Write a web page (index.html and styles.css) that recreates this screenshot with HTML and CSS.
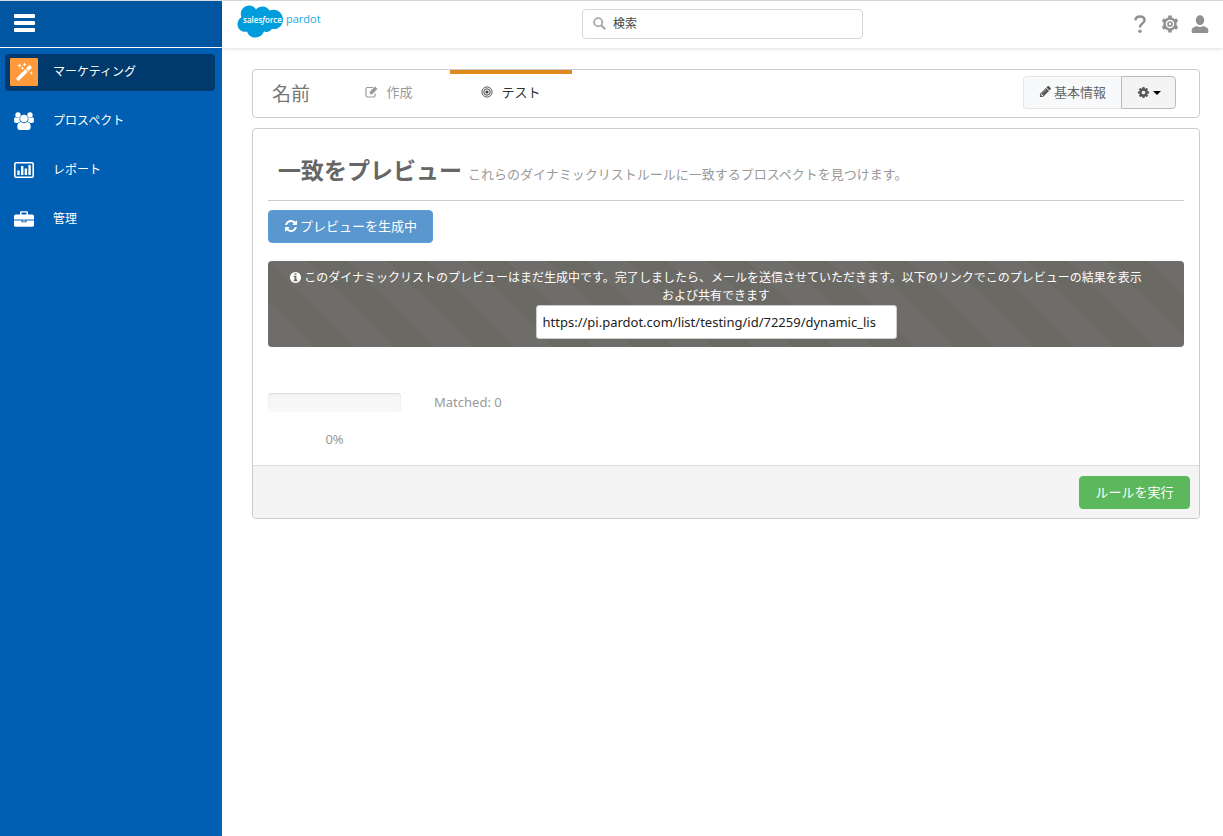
FILE: index.html
```html
<!DOCTYPE html>
<html lang="ja">
<head>
<meta charset="utf-8">
<title>一致をプレビュー</title>
<meta name="viewport" content="width=device-width, initial-scale=1">
<link rel="stylesheet" href="styles.css">
</head>
<body>
<div class="app">
  <aside class="sidebar">
    <div class="sidebar-top">
      <button class="menu-toggle" type="button" aria-label="メニュー"><span></span><span></span><span></span></button>
    </div>
    <nav class="nav">
      <a class="nav-item active" href="#">
        <span class="nav-icon"><svg viewBox="0 0 20 20" width="20" height="20" fill="#fff"><path d="M2.500 16 11.300 7.200l2.600 2.600L5.100 18.600q-.7.6-1.300 0L2.500 17.300q-.6-.6 0-1.300z"/><path d="M12 6.500 15 3.500q.6-.5 1.200 0L17.600 4.900q.5.6 0 1.200L14.600 9.100z"/><path d="M5.500 1.200 6.200 3l1.800.6-1.800.6-.7 1.800-.6-1.800L3 3.600 4.900 3zM10.500.200l.6 1.500 1.500.6-1.500.600-.6 1.500-.6-1.500-1.500-.6 1.500-.600zM8.500 4.500l.5 1.300 1.300.5L9 6.800l-.5 1.300L8 6.800l-1.300-.5L8 5.800zM17.300 9l.5 1.400 1.400.5-1.400.5-.5 1.400-.5-1.400-1.400-.5 1.400-.500z"/></svg></span>
        <span>マーケティング</span>
      </a>
      <a class="nav-item" href="#">
        <span class="nav-icon"><svg viewBox="0 0 20 18" width="20" height="18" fill="#fff"><circle cx="4" cy="3" r="2.700"/><circle cx="16" cy="3" r="2.700"/><path d="M0 8.500Q0 5 1.800 5.400q2 1.200 3.900.2Q5 8 6.500 9.700q-2 0-3 1.300H2Q0 11 0 8.500zM20 8.500Q20 5 18.200 5.400q-2 1.200-3.900.2Q15 8 13.500 9.700q2 0 3 1.300H18q2 0 2-2.500z"/><circle cx="10" cy="6.500" r="3.800"/><path d="M3.300 15q0-4.800 3.200-5 3.500 2.300 7 0 3.200.2 3.200 5 0 3-2.700 3H6q-2.700 0-2.700-3z"/></svg></span>
        <span>プロスペクト</span>
      </a>
      <a class="nav-item" href="#">
        <span class="nav-icon"><svg viewBox="0 0 20 16" width="20" height="16"><rect x=".8" y=".8" width="18.400" height="14.400" rx="1.200" fill="none" stroke="#fff" stroke-width="1.600"/><path fill="#fff" d="M3.300 8.500h2.400V13H3.300zM7 4h2.400v9H7zM10.700 6.500h2.400V13h-2.400zM14.400 3h2.400v10h-2.400z"/></svg></span>
        <span>レポート</span>
      </a>
      <a class="nav-item" href="#">
        <span class="nav-icon"><svg viewBox="0 0 20 16" width="20" height="16" fill="#fff"><path d="M6 3.500V1.500Q6 .2 7.300.2h5.400Q14 .2 14 1.500v2h4.200Q20 3.500 20 5.300V8.400H0V5.300Q0 3.500 1.800 3.500zM7.600 1.600v1.900h4.800V1.600zM0 9.400h7.500v1.300q0 .6.600.6h3.800q.6 0 .6-.6V9.400H20v4.800q0 1.600-1.800 1.600H1.800Q0 15.800 0 14.200z" fill-rule="evenodd"/><path d="M8.500 9.400h3v1h-3z"/></svg></span>
        <span>管理</span>
      </a>
    </nav>
  </aside>

  <div class="page">
    <header class="topbar">
      <a class="logo" href="#" aria-label="salesforce pardot">
        <svg viewBox="0 0 86 34" width="86" height="34">
          <path fill="#009ddc" d="M19 4.500C20.800 2.300 23.200 1.600 25.400 1.600c3 0 5.500 1.500 7 4 1.400-.7 2.800-.9 4-.9 5.800 0 9.600 4.600 9.600 9.700 0 6.300-5.300 10.600-11 9.400-1.400 2.500-4.700 4-8 2.800-1.500 3.800-4.800 5.900-8.600 5.900-4 0-7-2.200-8.300-5.800C4.600 27.600.500 24 .500 19.200c0-3.200 1.600-5.700 3.900-7C2.200 6 6.500.5 12 .5c3 0 5.500 1.600 7 4z"/>
          <text class="logo-sf" x="6" y="18">sales<tspan class="logo-force">f</tspan>orce</text>
          <text class="logo-pardot" x="49" y="18">pardot</text>
        </svg>
      </a>
      <label class="search">
        <svg viewBox="0 0 13 13" width="13" height="13" fill="none" stroke="#aaa"><circle cx="5.200" cy="5.200" r="4.100" stroke-width="1.800"/><path d="m8.300 8.300 4 4" stroke-width="2.200"/></svg>
        <input type="text" placeholder="検索" aria-label="検索">
      </label>
      <div class="tools">
        <button type="button" aria-label="ヘルプ"><svg viewBox="0 0 18 20" width="18" height="20"><path d="M4.400 6.400Q4.600 2.400 9 2.400t4.600 3.700q0 2-2.200 3.400Q9 11.100 9 13.600" fill="none" stroke="#919191" stroke-width="2.500"/><circle cx="9" cy="17.300" r="1.700" fill="#919191"/></svg></button>
        <button type="button" aria-label="設定"><svg viewBox="0 0 18 20" width="18" height="20" fill="none" stroke="#919191"><circle cx="9" cy="10" r="5.500" stroke-width="2.600"/><circle cx="9" cy="10" r="2" stroke-width="1.700"/><path stroke-width="3.600" d="M9 1.600v2.600M9 15.800v2.600M1.700 5.800 4 7.100M14 12.900l2.300 1.300M1.700 14.200 4 12.900M14 7.100l2.300-1.300"/></svg></button>
        <button type="button" aria-label="アカウント"><svg viewBox="0 0 18 20" width="18" height="20" fill="#919191"><ellipse cx="9" cy="6.300" rx="4.200" ry="5"/><path d="M.700 18.300v-2q0-2.600 3.600-3.700l1.600-.5q3 1.800 6.200 0l1.600.5q3.600 1.100 3.600 3.700v2q0 .7-.7.700H1.400q-.7 0-.7-.7z"/></svg></button>
      </div>
    </header>

    <main class="content">
      <section class="tabs">
        <h1 class="tabs-title">名前</h1>
        <a class="tab" href="#">
          <svg viewBox="0 0 13 12" width="13" height="12" fill="none" stroke="#999"><path d="M8 1.500H2.500Q1 1.500 1 3v6.500Q1 11 2.500 11H8.500Q10 11 10 9.500V7.500" stroke-width="1.200"/><path d="M4.800 8.200v-2.400L10 .6l2.400 2.400-5.200 5.200z" fill="#999" stroke="none"/></svg>
          <span>作成</span>
        </a>
        <a class="tab current" href="#">
          <svg viewBox="0 0 12 12" width="12" height="12" fill="none" stroke="#444"><circle cx="6" cy="6" r="5.100" stroke-width=".9"/><circle cx="6" cy="6" r="3.200" stroke-width="1"/><circle cx="6" cy="6" r="1.600" fill="#444" stroke="none"/></svg>
          <span>テスト</span>
        </a>
        <div class="tab-actions">
          <button class="btn btn-info" type="button">
            <svg viewBox="0 0 1792 1792" width="13" height="13" fill="#555"><path d="M491 1536l91-91-235-235-91 91v107h128v128h107zm523-928q0-22-22-22-10 0-17 7l-542 542q-7 7-7 17 0 22 22 22 10 0 17-7l542-542q7-7 7-17zm-54-192l416 416-832 832h-416v-416zm683 96q0 53-37 90l-166 166-416-416 166-165q36-38 90-38 53 0 91 38l235 234q37 39 37 91z"/></svg>
            <span>基本情報</span>
          </button>
          <button class="btn btn-gear" type="button" aria-label="操作">
            <svg viewBox="0 0 1792 1792" width="13" height="13" fill="#555"><path d="M1152 896q0-106-75-181t-181-75-181 75-75 181 75 181 181 75 181-75 75-181zm512-109v222q0 12-8 23t-20 13l-185 28q-19 54-39 91 35 50 107 138 10 12 10 25t-9 23q-27 37-99 108t-94 71q-12 0-26-9l-138-108q-44 23-91 38-16 136-29 186-7 28-36 28h-222q-14 0-24.500-8.500t-11.500-21.500l-28-184q-49-16-90-37l-141 107q-10 9-25 9-14 0-25-11-126-114-165-168-7-10-7-23 0-12 8-23 15-21 51-66.500t54-70.500q-27-50-41-99l-183-27q-13-2-21-12.500t-8-23.500v-222q0-12 8-23t19-13l186-28q14-46 39-92-40-57-107-138-10-12-10-24 0-10 9-23 26-36 98.500-107.500t94.500-71.500q13 0 26 10l138 107q44-23 91-38 16-136 29-186 7-28 36-28h222q14 0 24.500 8.500t11.500 21.500l28 184q49 16 90 37l142-107q9-9 24-9 13 0 25 10 129 119 165 170 7 8 7 22 0 12-8 23-15 21-51 66.500t-54 70.500q26 50 41 98l183 28q13 2 21 12.500t8 23.500z"/></svg>
            <svg viewBox="0 0 8 4" width="8" height="4"><path d="M0 0h8L4 4z"/></svg>
          </button>
        </div>
      </section>

      <section class="panel">
        <div class="panel-body">
          <div class="panel-head">
            <h2>一致をプレビュー</h2>
            <p>これらのダイナミックリストルールに一致するプロスペクトを見つけます。</p>
          </div>
          <button class="btn btn-primary" type="button">
            <svg viewBox="0 0 1792 1792" width="14" height="14" fill="#fff"><path d="M1639 1056q0 5-1 7-64 268-268 434.500t-478 166.500q-146 0-282.500-55t-243.500-157l-129 129q-19 19-45 19t-45-19-19-45v-448q0-26 19-45t45-19h448q26 0 45 19t19 45-19 45l-137 137q71 66 161 102t187 36q134 0 250-65t186-179q11-17 53-117 8-23 30-23h192q13 0 22.500 9.500t9.500 22.500zm25-800v448q0 26-19 45t-45 19h-448q-26 0-45-19t-19-45 19-45l138-138q-148-137-349-137-134 0-250 65t-186 179q-11 17-53 117-8 23-30 23h-199q-13 0-22.500-9.500t-9.500-22.500v-7q65-268 270-434.500t480-166.500q146 0 284 55.500t245 156.500l130-129q19-19 45-19t45 19 19 45z"/></svg>
            <span>プレビューを生成中</span>
          </button>
          <div class="alert" role="status">
            <p><svg class="info" viewBox="128 128 1536 1536" width="11" height="11" fill="#fff"><path d="M1152 1376v-160q0-14-9-23t-23-9h-96v-512q0-14-9-23t-23-9h-320q-14 0-23 9t-9 23v160q0 14 9 23t23 9h96v320h-96q-14 0-23 9t-9 23v160q0 14 9 23t23 9h448q14 0 23-9t9-23zm-128-896v-160q0-14-9-23t-23-9h-192q-14 0-23 9t-9 23v160q0 14 9 23t23 9h192q14 0 23-9t9-23zm640 416q0 209-103 385.500t-279.500 279.500-385.500 103-385.500-103-279.500-279.500-103-385.500 103-385.500 279.500-279.500 385.500-103 385.500 103 279.500 279.500 103 385.500z"/></svg>このダイナミックリストのプレビューはまだ生成中です。完了しましたら、メールを送信させていただきます。以下のリンクでこのプレビューの結果を表示および共有できます</p>
            <input class="link-box" type="text" aria-label="プレビューのリンク" value="https://pi.pardot.com/list/testing/id/72259/dynamic_lis" readonly>
          </div>
          <div class="progress-row">
            <div class="progress-col">
              <div class="progress" role="progressbar" aria-valuenow="0" aria-valuemin="0" aria-valuemax="100" aria-label="進行状況"></div>
              <span>0%</span>
            </div>
            <span>Matched: 0</span>
          </div>
        </div>
        <footer class="panel-foot">
          <button class="btn btn-success" type="button">ルールを実行</button>
        </footer>
      </section>
    </main>
  </div>
</div>
</body>
</html>
```
FILE: styles.css
```css
* {
  box-sizing: border-box;
}

body {
  margin: 0;
  background: #fff;
  color: #999;
  font: 13px/18px "Noto Sans", "Noto Sans CJK JP", sans-serif;
}

button,
input {
  font: inherit;
}

button {
  cursor: pointer;
}

a {
  color: inherit;
  text-decoration: none;
}

h1,
h2,
p {
  margin: 0;
}

svg {
  flex: none;
}

.app {
  display: flex;
  min-height: 100vh;
  border-top: 1px solid #d8dde6;
}

/* Sidebar */
.sidebar {
  flex: none;
  width: 222px;
  background: #005fb2;
  color: #fff;
}

.sidebar-top {
  display: flex;
  align-items: center;
  height: 47px;
  padding: 0 0 2px 14px;
  border-bottom: 1px solid #fff;
  background: #0056a0;
}

.menu-toggle {
  display: grid;
  gap: 3px;
  width: 21px;
  padding: 0;
  border: 0;
  background: none;
}

.menu-toggle span {
  height: 4px;
  border-radius: 1px;
  background: #fff;
}

.nav {
  display: grid;
  gap: 12px;
  padding: 6px 7px 6px 5px;
}

.nav-item {
  display: flex;
  align-items: center;
  gap: 15px;
  height: 37px;
  padding: 0 0 1px 5px;
  border-radius: 4px;
  font-size: 12px;
}

.nav-item.active {
  background: #00396b;
}

.nav-icon {
  display: flex;
  align-items: center;
  justify-content: center;
  width: 28px;
  height: 28px;
  border-radius: 1px;
}

.active .nav-icon {
  background: #ff9a3c;
}

/* Top bar */
.page {
  flex: 1;
  min-width: 0;
}

.topbar {
  display: grid;
  grid-template-columns: 1fr 281px 1fr;
  align-items: center;
  height: 47px;
  padding: 0 14px 2px;
  box-shadow: 0 1px 4px rgba(0, 0, 0, 0.12);
}

.logo svg {
  display: block;
}

.logo {
  padding: 0 0 3px 1px;
}

.logo-sf {
  fill: #fff;
  font: 600 8px "Open Sans", sans-serif;
}

.logo-force {
  font-style: italic;
}

.logo-pardot {
  fill: #1fa5dc;
  font: 11px "Open Sans", sans-serif;
}

.search {
  display: flex;
  align-items: center;
  gap: 7px;
  height: 30px;
  padding: 0 10px;
  border: 1px solid #d8d8d8;
  border-radius: 4px;
}

.search input {
  flex: 1;
  min-width: 0;
  padding: 0;
  border: 0;
  outline: 0;
  background: none;
  font-size: 12px;
}

.search input::placeholder {
  color: #444;
  opacity: 1;
}

.tools {
  display: flex;
  gap: 12px;
  justify-content: flex-end;
}

.tools button {
  display: flex;
  padding: 0;
  border: 0;
  background: none;
}

/* Tab strip */
.content {
  display: grid;
  gap: 10px;
  padding: 21px 23px 21px 30px;
}

.tabs {
  display: flex;
  height: 49px;
  padding: 0 23px 0 19px;
  border: 1px solid #ccc;
  border-radius: 4px;
}

.tabs-title {
  align-self: center;
  width: 56px;
  color: #777;
  font-size: 19px;
  font-weight: 400;
  line-height: 28px;
}

.tab {
  display: flex;
  align-items: center;
  justify-content: center;
  gap: 8px;
  width: 122px;
  border-top: 4px solid transparent;
  padding-bottom: 7px;
}

.tab.current {
  border-top-color: #e08a1e;
  color: #333;
}

.tab-actions {
  display: flex;
  align-self: center;
  margin: 0 0 2px auto;
}

/* Buttons */
.btn {
  display: inline-flex;
  align-items: center;
  justify-content: center;
  gap: 2px;
  height: 33px;
  padding: 0 15px 2px;
  border: 1px solid;
  border-radius: 4px;
  color: #fff;
}

.btn-info {
  border-color: #e4e4e4;
  border-right: 0;
  border-radius: 4px 0 0 4px;
  background: #f7f9fb;
  color: #666;
}

.btn-gear {
  width: 55px;
  gap: 3px;
  padding-bottom: 0;
  border-color: #bbb;
  border-radius: 0 4px 4px 0;
  background: #f4f4f4;
}

.btn-primary {
  border-color: #5b9fdc;
  background: #5a97cf;
}

.btn-success {
  width: 111px;
  border-color: #5cb85c;
  background: #5cb85c;
}

/* Panel */
.panel {
  border: 1px solid #ccc;
  border-radius: 4px;
  overflow: hidden;
}

.panel-body {
  padding: 24px 15px 17px;
}

.panel-head {
  display: flex;
  align-items: baseline;
  gap: 6px;
  height: 48px;
  margin-bottom: 9px;
  padding-left: 10px;
  border-bottom: 1px solid #ccc;
}

.panel-head h2 {
  color: #666;
  font-size: 23px;
  font-weight: 700;
  line-height: 34px;
}

.alert {
  margin-top: 18px;
  padding: 8px 37px 8px 17px;
  border-radius: 4px;
  background-color: #6b6964;
  background-image: linear-gradient(45deg, #6f6d69 25%, transparent 25%, transparent 50%, #6f6d69 50%, #6f6d69 75%, transparent 75%);
  background-size: 80px 80px;
  color: #fff;
  font-size: 12px;
  text-align: center;
}

.info {
  margin-right: 3px;
  vertical-align: -1px;
}

.link-box {
  display: block;
  width: 361px;
  height: 34px;
  margin: 0 auto;
  padding: 0 6px;
  border: 1px solid #ccc;
  border-radius: 3px;
  color: #222;
  font-size: 13px;
}

.progress-row {
  display: flex;
  gap: 33px;
  margin-top: 46px;
}

.progress-col {
  display: grid;
  gap: 18px;
  justify-items: center;
  width: 133px;
}

.progress {
  width: 100%;
  height: 19px;
  border-radius: 3px;
  background: linear-gradient(#f4f4f4, #f9f9f9);
  box-shadow: inset 0 1px 2px rgba(0, 0, 0, 0.1);
}

.panel-foot {
  display: flex;
  justify-content: flex-end;
  padding: 10px 9px 9px;
  border-top: 1px solid #ddd;
  background: #f4f4f4;
}
```
